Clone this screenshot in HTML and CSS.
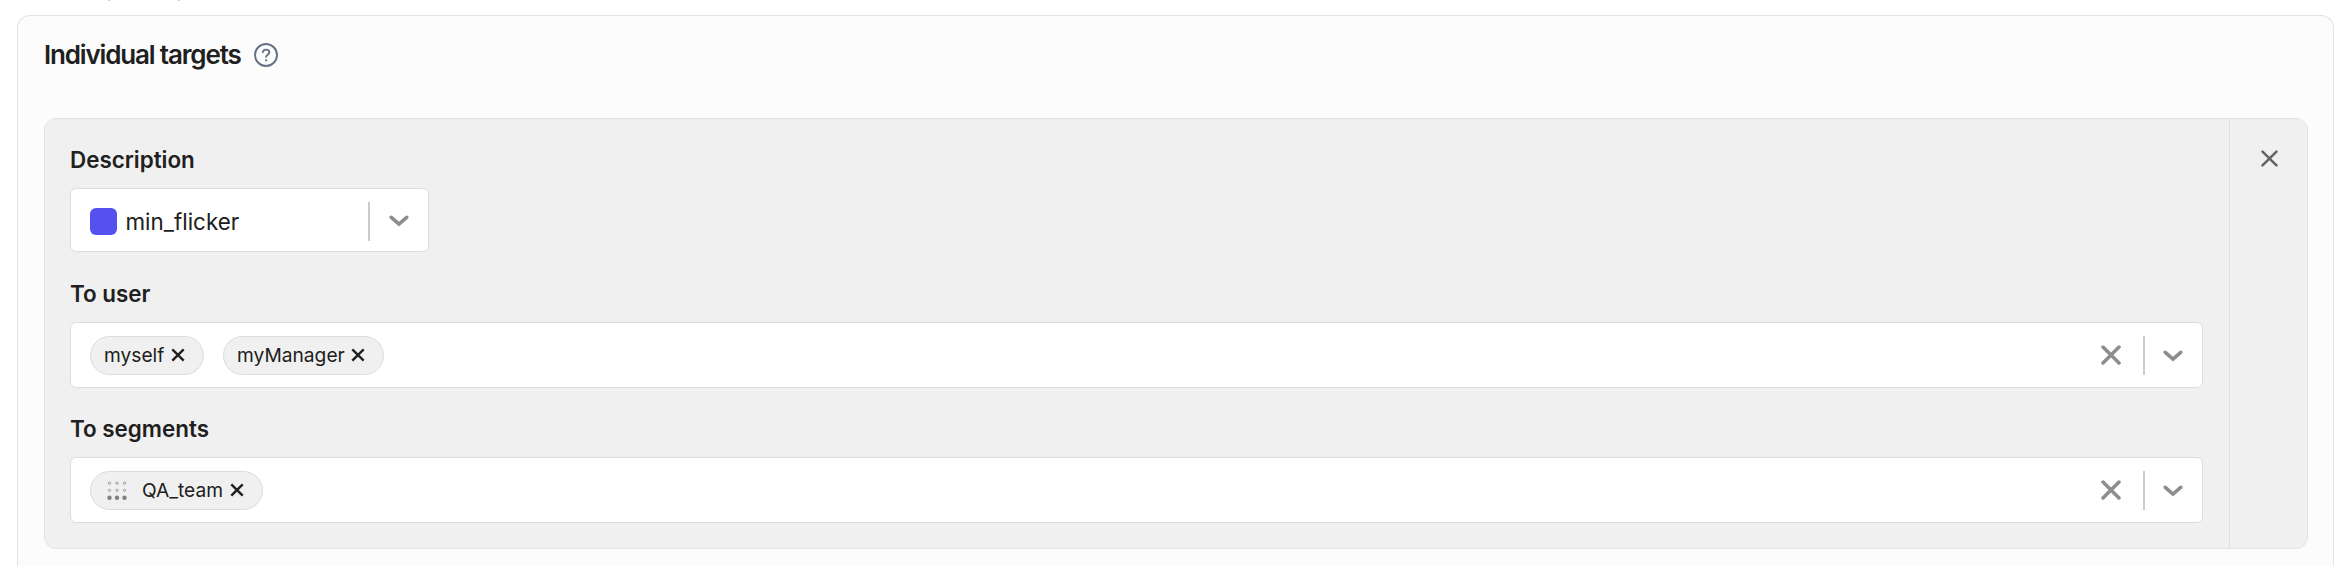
FILE: index.html
```html
<!DOCTYPE html>
<html lang="en">
<head>
<meta charset="utf-8">
<title>Individual targets</title>
<link rel="stylesheet" href="styles.css">
</head>
<body>
<svg width="0" height="0" class="sprite">
  <symbol id="chevron" viewBox="0 0 20 12"><path d="M2.300 2.300 10 9l7.700-6.700" fill="none" stroke="currentColor" stroke-width="3.600" stroke-linecap="round" stroke-linejoin="miter"/></symbol>
  <symbol id="cross" viewBox="0 0 20 20"><path d="M1.800 1.800l16.400 16.400M18.200 1.800 1.800 18.200" fill="none" stroke="currentColor" stroke-width="3" stroke-linecap="round"/></symbol>
  <symbol id="cross-bold" viewBox="0 0 20 20"><path d="M2 2l16 16M18 2 2 18" fill="none" stroke="currentColor" stroke-width="3.500" stroke-linecap="round"/></symbol>
  <symbol id="cross-small" viewBox="0 0 14 14"><path d="M1.300 1.300l11.400 11.400M12.700 1.300 1.300 12.700" fill="none" stroke="currentColor" stroke-width="2.400" stroke-linecap="butt"/></symbol>
</svg>
<main class="panel">
  <header class="panel-header">
    <h2 class="title">Individual targets</h2>
    <svg class="help" viewBox="0 0 24 24"><g fill="none" stroke="currentColor" stroke-linecap="round" stroke-linejoin="round"><circle cx="12" cy="12" r="11" stroke-width="1.900"/><path d="M8.900 9.200c.3-1.700 1.500-2.600 3.200-2.600 1.800 0 3.200 1.100 3.200 2.800 0 2.100-3.200 2.500-3.200 4.400" stroke-width="1.900"/></g><circle cx="12.100" cy="17.300" r="1.150" fill="currentColor"/></svg>
  </header>
  <section class="target">
    <div class="fields">
      <div class="label">Description</div>
      <div class="field variation">
        <span class="swatch"></span><span class="value">min_flicker</span>
        <span class="separator"></span><svg class="chevron"><use href="#chevron"/></svg>
      </div>
      <div class="label">To user</div>
      <div class="field multi">
        <span class="chip user"><span class="chip-text">myself</span><svg class="remove"><use href="#cross-small"/></svg></span>
        <span class="chip manager"><span class="chip-text">myManager</span><svg class="remove"><use href="#cross-small"/></svg></span>
        <svg class="clear"><use href="#cross-bold"/></svg><span class="separator"></span><svg class="chevron"><use href="#chevron"/></svg>
      </div>
      <div class="label">To segments</div>
      <div class="field multi">
        <span class="chip segment"><svg class="dots" viewBox="0 0 20 19"><g fill="none" stroke="#8b8b8b" stroke-width=".8"><circle cx="2.500" cy="2.200" r="1.150"/><circle cx="10" cy="2.200" r="1.150"/><circle cx="17.500" cy="2.200" r="1.150"/><circle cx="2.500" cy="9.300" r="1.150"/><circle cx="10" cy="9.300" r="1.150"/><circle cx="17.500" cy="9.300" r="1.150"/></g><g fill="#808080"><circle cx="2.500" cy="16.800" r="2.200"/><circle cx="10" cy="16.800" r="2.200"/><circle cx="17.500" cy="16.800" r="2.200"/></g></svg><span class="chip-text">QA_team</span><svg class="remove"><use href="#cross-small"/></svg></span>
        <svg class="clear"><use href="#cross-bold"/></svg><span class="separator"></span><svg class="chevron"><use href="#chevron"/></svg>
      </div>
    </div>
    <div class="actions"><svg class="delete"><use href="#cross"/></svg></div>
  </section>
</main>
</body>
</html>
```
FILE: styles.css
```css
* { box-sizing: border-box; }
html { background: #fff; }
body {
  margin: 0;
  height: 566px;
  overflow: hidden;
  padding: 15px 16px 0 17px;
  background:
    linear-gradient(#ccc, #ccc) 108px 0 / 2px 1px no-repeat,
    linear-gradient(#ccc, #ccc) 178px 0 / 2px 1px no-repeat,
    #fff;
  color: #202020;
  font-family: Inter, sans-serif;
}
svg { display: block; flex: none; }
.sprite { position: absolute; }
.panel {
  height: 551px;
  padding: 0 25px 0 26px;
  background: #fcfcfc;
  border: 1px solid #e2e2e2;
  border-bottom: 0;
  border-radius: 13px 13px 0 0;
}
.panel-header { display: flex; align-items: center; height: 102px; padding-bottom: 24px; }
.title { margin: 0; font-size: 26px; font-weight: 600; line-height: 32px; letter-spacing: -1.16px; white-space: nowrap; width: 210px; }
.help { width: 24px; height: 24px; color: #667085; }
.target {
  display: flex;
  height: 431px;
  background: #f0f0f0;
  border: 1px solid #e2e2e2;
  border-radius: 12px;
}
.fields { flex: 1; padding: 27px 26px 0 25px; }
.actions { width: 78px; border-left: 1px solid #e0e0e0; padding: 30.500px 0 0 30.500px; }
.delete { width: 17px; height: 17px; color: #646464; }
.label { height: 28px; margin-bottom: 14px; font-size: 22.400px; font-weight: 600; line-height: 28px; white-space: nowrap; }
.field {
  display: flex;
  align-items: center;
  background: #fff;
  border: 1px solid #dcdcdc;
  border-radius: 6px;
}
.variation { width: 359px; height: 64px; padding: 2px 19px 0 18.500px; margin-bottom: 28px; }
.multi { height: 66px; padding: 0 19px; margin-bottom: 27px; }
.swatch { width: 27px; height: 27px; border-radius: 6px; background: #5451ee; margin-right: 9px; }
.value { font-size: 22.400px; line-height: 28px; padding-top: 1px; }
.separator { width: 2px; height: 39px; background: #ccc; margin-left: auto; }
.chevron { width: 20px; height: 12px; margin-left: 18px; color: #8d8d8d; }
.variation .chevron { margin-left: 19px; }
.clear { width: 20px; height: 20px; margin-left: auto; color: #8d8d8d; }
.clear + .separator { margin-left: 22px; }
.multi .chevron { margin-top: 2px; }
.chip {
  display: flex;
  align-items: center;
  height: 39px;
  padding-left: 13px;
  background: #f0f0f0;
  border: 1px solid #dcdcdc;
  border-radius: 20px;
  font-size: 19.200px;
}
.user { width: 114px; margin-right: 19px; }
.manager { width: 161px; }
.segment { width: 173px; padding-left: 16px; }
.chip-text { line-height: 26px; }
.remove { width: 14px; height: 14px; margin-left: auto; margin-right: 18px; }
.dots { width: 20px; height: 19px; margin-right: 15px; }
```
